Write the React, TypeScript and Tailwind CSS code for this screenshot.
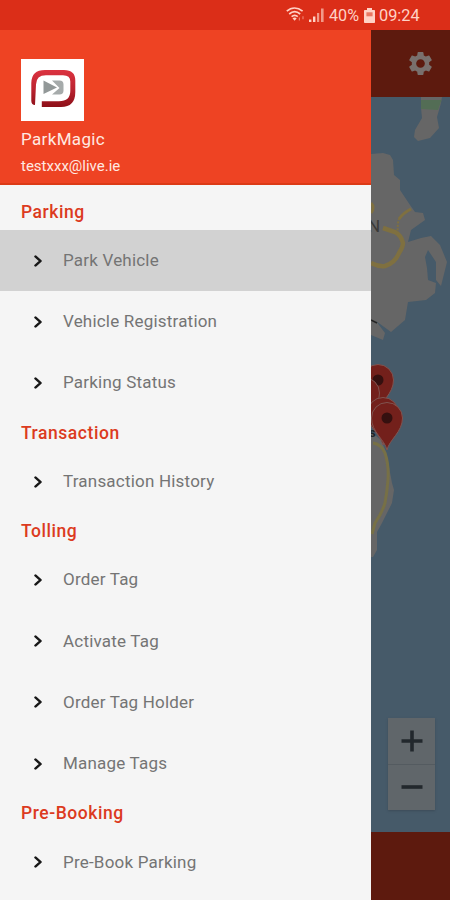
import { ChevronRight } from "lucide-react";
import { MdSettings } from "react-icons/md";

type Section = { title: string; items: string[] };

const sections: Section[] = [
  { title: "Parking", items: ["Park Vehicle", "Vehicle Registration", "Parking Status"] },
  { title: "Transaction", items: ["Transaction History"] },
  { title: "Tolling", items: ["Order Tag", "Activate Tag", "Order Tag Holder", "Manage Tags"] },
  { title: "Pre-Booking", items: ["Pre-Book Parking"] },
];

function StatusBar() {
  return (
    <div className="flex h-[30px] shrink-0 items-center bg-[#db2e18] pl-[286px] text-[#ffd2c6]">
      {/* Wifi */}
      <svg width="20" height="18" viewBox="0 0 20 18" fill="none" stroke="currentColor" strokeWidth="1.7">
        <path d="M0.8 5.2C5.500 1 11.500 1 16.600 5.200M3.200 8C6.800 5 10.600 5 14.200 8M5.600 10.600c2-1.700 4.200-1.700 6.200 0" />
        <path d="M6.500 12.200c1.300-1 3-1 4.200 0L8.600 14.800z" fill="currentColor" stroke="none" />
        <path d="M13.400 11.500v3M17 10.200v3" strokeWidth="1.200" opacity="0.5" />
      </svg>
      {/* Signal */}
      <svg width="17" height="16" viewBox="0 0 17 16" fill="currentColor" className="ml-[2px]">
        <path d="M1 12.500h2.400V15H1zM5 9.500h2.400V15H5z" />
        <path d="M9 6h2.200v9H9zM13 1.500h2.600V15H13z" opacity="0.65" />
      </svg>
      <span className="ml-[4px] w-[31px] origin-left scale-x-[0.95] text-[17px] leading-none">40%</span>
      {/* Battery */}
      <svg width="11" height="15" viewBox="0 0 11 15" className="ml-[4px]">
        <path d="M3 0h5v2h2.200q.8 0 .8.8v11.400q0 .8-.8.8H.8Q0 15 0 14.200V2.800Q0 2 .8 2H3z" fill="currentColor" />
        <path d="M2.400 4.300h6.200v4H2.400z" fill="#e97762" />
      </svg>
      <span className="ml-[4px] origin-left scale-x-[0.96] text-[17px] leading-none">09:24</span>
    </div>
  );
}

function Logo() {
  return (
    <svg width="63" height="62" viewBox="0 0 63 62" className="-ml-[0.500px] bg-white">
      <defs>
        <linearGradient id="ring" x1="0" y1="0" x2="0" y2="1">
          <stop offset="0" stopColor="#dc3340" />
          <stop offset="0.500" stopColor="#bd2431" />
          <stop offset="1" stopColor="#8c0f18" />
        </linearGradient>
      </defs>
      <path
        d="M10.300 42V24Q10.500 11 24 11h19Q54.300 11 54.300 21.500V33Q54.300 48 40 48H20.800v-5.800H38Q49.300 42.200 49.300 32V22.500Q49.300 16.200 42 16.200H25Q15.200 16.200 15 25.500L14 46Q10.500 46 10.300 42z"
        fill="url(#ring)"
      />
      <path d="M22.500 21.500 36 28.500 22.500 35z" fill="#929898" />
      <path d="M31 21.500h7.500q4 0 4 4v6q0 4-4 4H31l7.500-6.500z" fill="#a6abab" />
    </svg>
  );
}

function DrawerItem({ label, active }: { label: string; active: boolean }) {
  return (
    <li className={`flex h-[61.200px] items-center pl-[28px] ${active ? "bg-[#d2d2d2]" : ""}`}>
      <ChevronRight size={20} strokeWidth={3.200} className="scale-y-[0.9] text-[#181818]" />
      <span className="ml-[15px] text-[17px] tracking-[0.200px] text-[#747474]">{label}</span>
    </li>
  );
}

function Drawer() {
  return (
    <aside className="flex w-[371px] shrink-0 flex-col overflow-hidden bg-[#f5f5f5]">
      <div className="flex h-[155px] shrink-0 flex-col border-b-2 border-[#dc3a16] bg-[#ee4323] pt-[28.500px] pl-[21px] text-[#ffe9e2]">
        <Logo />
        <p className="mt-[7px] text-[17px] leading-[22px] tracking-[0.350px]">ParkMagic</p>
        <p className="mt-[6px] text-[15px] leading-[20px]">testxxx@live.ie</p>
      </div>
      <nav className="pt-[7.600px]">
        {sections.map((section) => (
          <div key={section.title}>
            <h2 className="flex h-[37.400px] items-center pt-px pl-[21px] text-[17.500px] font-medium tracking-[0.550px] text-[#dc3a20]">
              {section.title}
            </h2>
            <ul>
              {section.items.map((item) => (
                <DrawerItem key={item} label={item} active={item === "Park Vehicle"} />
              ))}
            </ul>
          </div>
        ))}
      </nav>
    </aside>
  );
}

function Pin({ x, y }: { x: number; y: number }) {
  return (
    <g transform={`translate(${x} ${y})`}>
      <path
        d="M0 32C-2 22-15.500 14-15.500 0a15.500 15.500 0 0 1 31 0C15.500 14 2 22 0 32z"
        fill="#73201b"
        stroke="#805450"
        strokeWidth="1"
      />
      <circle r="5.500" fill="#35100f" />
    </g>
  );
}

function MapView() {
  return (
    <div className="relative h-[735px] shrink-0 overflow-hidden bg-[#465a69]">
      <svg width="79" height="735" viewBox="0 0 79 735">
        {/* Land */}
        <g fill="#666666">
          <path d="M50 0v11l1 10-7 12-1 7 4 4 12-3 9-10-2-11 4-14 1-6z" />
          <path
            fillRule="evenodd"
            d="M0 57l12-1 7 2 3 5 1 15 6 5v10l10 15 5 7 8 1 2 7-14 10-3 12 13-4 10-2 9 9 7 17-6 24-5-6v-18l-8-12-3 7 2 11 1 12 8 3-1 10-9 7-18 2-3 18-14 12-15-11 9 12-2 7-12-5z"
          />
          <path d="M0 335l10 8 5 12 3 15 3 16 2 7-2 13-10 20-5 9v18l-4 7H0z" />
        </g>
        <path d="M50 3h20.500L67 13l-17-1z" fill="#536d55" />
        {/* Roads */}
        <g fill="none" stroke="#7f7040" strokeWidth="3">
          <path d="M0 106q4 4 0 10" />
          <path d="M0 166q8 4 14 3 10-3 14-13 4-6 4-10-2-8-8-11l-12-4" strokeWidth="4.500" />
          <path d="M27 137q-1-9 1-15" strokeDasharray="2 1.500" strokeWidth="2" />
          <path d="M28 122q4-6 12-10" />
          <path d="M2 346q8 1 12 10 4 12 3 27-1 12-3 23-3 10-10 20l-3 11" stroke="#777046" />
        </g>
        <path d="M0 223l2 1 4 2" stroke="#252525" strokeWidth="1.500" fill="none" />
        <text x="-3" y="135" fontSize="17" fill="#3a3a38">
          N
        </text>
        <text x="-2" y="340" fontSize="13" fontWeight="700" fill="#202528">
          s
        </text>
        <Pin x={7} y={283} />
        <Pin x={-7} y={296} />
        <Pin x={12} y={316} />
        <Pin x={16} y={321} />
      </svg>
      {/* Zoom control */}
      <div className="absolute top-[621px] left-[17px] flex h-[92px] w-[47px] flex-col bg-[#60666a] text-[#22282d] shadow-[0_1px_2px_#3d4c58]">
        <button className="flex flex-1 items-center justify-center border-b border-[#545b60]" aria-label="Zoom in">
          <svg width="22" height="22" viewBox="0 0 22 22" stroke="currentColor" strokeWidth="3.600">
            <path d="M0.500 11h21M11 0.500v21" />
          </svg>
        </button>
        <button className="flex flex-1 items-center justify-center" aria-label="Zoom out">
          <svg width="22" height="22" viewBox="0 0 22 22" stroke="currentColor" strokeWidth="3.600">
            <path d="M0.500 11h21" />
          </svg>
        </button>
      </div>
    </div>
  );
}

export default function App() {
  return (
    <div className="flex h-[900px] w-[450px] flex-col overflow-hidden font-['Roboto',sans-serif]">
      <StatusBar />
      <div className="flex min-h-0 flex-1">
        <Drawer />
        <main className="flex min-w-0 flex-1 flex-col bg-[#5d1a0e]">
          <div className="flex h-[67px] shrink-0 items-center justify-end pr-[15px]">
            <MdSettings size={29} className="text-[#79706d]" />
          </div>
          <MapView />
        </main>
      </div>
    </div>
  );
}
